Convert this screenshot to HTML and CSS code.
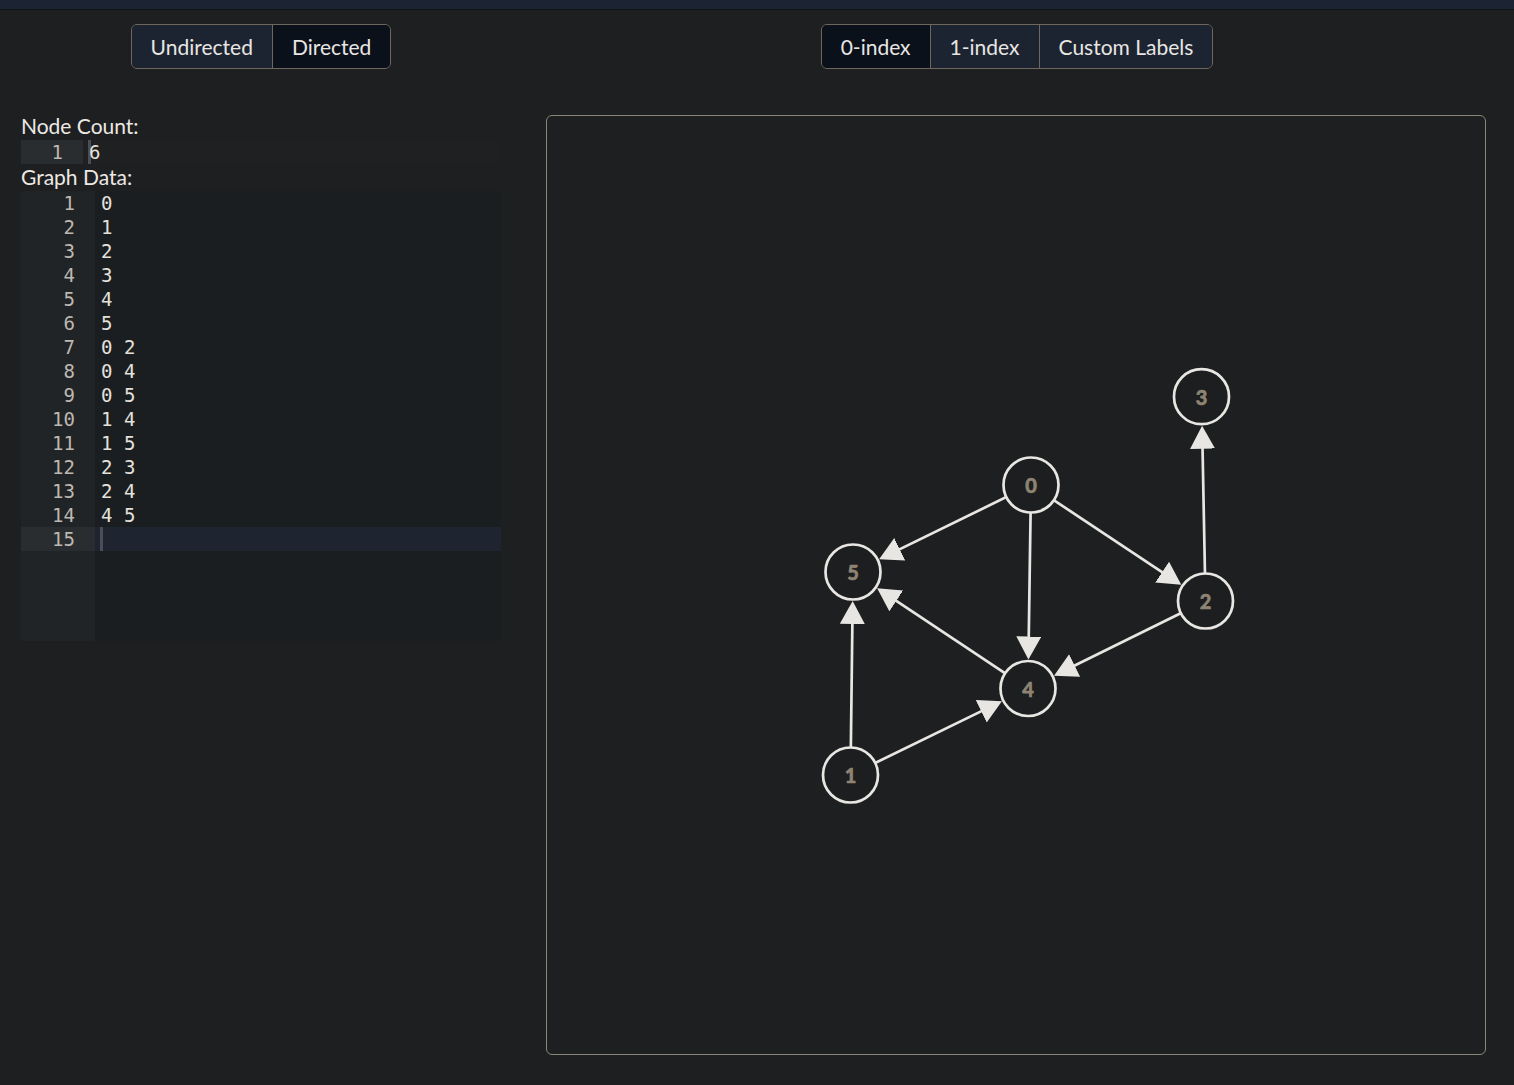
FILE: index.html
```html
<!DOCTYPE html>
<html lang="en">
<head>
<meta charset="utf-8">
<title>Graph Editor</title>
<link rel="stylesheet" href="styles.css">
</head>
<body>
<div class="topbar"></div>
<main class="layout">
  <section class="left-col">
    <div class="btn-row">
      <div class="btn-group">
        <button class="btn">Undirected</button>
        <button class="btn active">Directed</button>
      </div>
    </div>
    <div class="field-label first">Node Count:</div>
    <div class="editor editor-count">
      <div class="gutter gutter-narrow">
        <div class="ln active">1</div>
      </div>
      <div class="code">
        <div class="line"><span class="cursor"></span>6</div>
      </div>
    </div>
    <div class="field-label">Graph Data:</div>
    <div class="editor editor-data">
      <div class="gutter gutter-wide">
        <div class="ln">1</div><div class="ln">2</div><div class="ln">3</div><div class="ln">4</div><div class="ln">5</div>
        <div class="ln">6</div><div class="ln">7</div><div class="ln">8</div><div class="ln">9</div><div class="ln">10</div>
        <div class="ln">11</div><div class="ln">12</div><div class="ln">13</div><div class="ln">14</div><div class="ln active">15</div>
      </div>
      <div class="code">
        <div class="line">0</div><div class="line">1</div><div class="line">2</div><div class="line">3</div><div class="line">4</div>
        <div class="line">5</div><div class="line">0 2</div><div class="line">0 4</div><div class="line">0 5</div><div class="line">1 4</div>
        <div class="line">1 5</div><div class="line">2 3</div><div class="line">2 4</div><div class="line">4 5</div>
        <div class="line active"><span class="cursor"></span></div>
      </div>
    </div>
  </section>
  <section class="right-col">
    <div class="btn-row">
      <div class="btn-group">
        <button class="btn active">0-index</button>
        <button class="btn">1-index</button>
        <button class="btn">Custom Labels</button>
      </div>
    </div>
    <div class="canvas">
      <svg class="graph" width="938" height="938" viewBox="0 0 938 938" xmlns="http://www.w3.org/2000/svg">
        <defs>
          <marker id="arrow" markerUnits="userSpaceOnUse" markerWidth="24" markerHeight="26" refX="18" refY="12.5" orient="auto">
            <path d="M0,0 L23,12.5 L0,25 Z" fill="#e8e6e2"/>
          </marker>
        </defs>
        <g class="edges" stroke="#e8e6e2" stroke-width="2.7">
          <line x1="484" y1="369" x2="630.1" y2="466.1" marker-end="url(#arrow)"/>
          <line x1="484" y1="369" x2="481.5" y2="538.5" marker-end="url(#arrow)"/>
          <line x1="484" y1="369" x2="336.6" y2="441.1" marker-end="url(#arrow)"/>
          <line x1="303.5" y1="659" x2="450.4" y2="587.4" marker-end="url(#arrow)"/>
          <line x1="303.5" y1="659" x2="305.6" y2="490" marker-end="url(#arrow)"/>
          <line x1="658.5" y1="485" x2="655.2" y2="314.7" marker-end="url(#arrow)"/>
          <line x1="658.5" y1="485" x2="511.5" y2="557.5" marker-end="url(#arrow)"/>
          <line x1="481" y1="572.5" x2="334.3" y2="474.9" marker-end="url(#arrow)"/>
        </g>
        <g class="nodes">
          <g><circle cx="484" cy="369" r="27.5"/><text x="484" y="369">0</text></g>
          <g><circle cx="303.5" cy="659" r="27.5"/><text x="303.5" y="659">1</text></g>
          <g><circle cx="658.5" cy="485" r="27.5"/><text x="658.5" y="485">2</text></g>
          <g><circle cx="654.5" cy="280.7" r="27.5"/><text x="654.5" y="280.7">3</text></g>
          <g><circle cx="481" cy="572.5" r="27.5"/><text x="481" y="572.5">4</text></g>
          <g><circle cx="306" cy="456" r="27.5"/><text x="306" y="456">5</text></g>
        </g>
      </svg>
    </div>
  </section>
</main>
</body>
</html>
```

FILE: styles.css
```css
* { box-sizing: border-box; }

html, body {
  margin: 0;
  padding: 0;
  background: #1e1f21;
  color: #e8e6e3;
  font-family: Lato, "Open Sans", "Liberation Sans", sans-serif;
}

body {
  width: 1514px;
  height: 1085px;
  overflow: hidden;
}

.topbar {
  height: 10px;
  background: #1c2433;
  border-bottom: 1px solid #0e1014;
}

.layout {
  display: flex;
  align-items: flex-start;
  padding-left: 21px;
}

.left-col {
  width: 480px;
  display: flex;
  flex-direction: column;
}

.right-col {
  width: 940px;
  margin-left: 45px;
  display: flex;
  flex-direction: column;
}

.btn-row {
  display: flex;
  justify-content: center;
  padding-top: 14px;
  margin-bottom: 46px;
}

.right-col .btn-row { padding-left: 2px; }

.btn-group {
  display: flex;
  border: 1px solid #6e675d;
  border-radius: 6px;
  overflow: hidden;
}

.btn {
  height: 43px;
  padding: 0 19px;
  margin: 0;
  border: none;
  border-left: 1px solid #6e675d;
  background: #1c2431;
  color: #e8e6e3;
  font-family: Lato, "Open Sans", "Liberation Sans", sans-serif;
  font-size: 21px;
  line-height: 43px;
  cursor: pointer;
}

.btn:first-child { border-left: none; }

.btn.active { background: #0b111b; }

.field-label {
  font-size: 21px;
  line-height: 26px;
  height: 26px;
  color: #ece9e4;
}

.field-label.first { margin-top: -2px; }

.editor {
  display: flex;
  width: 480px;
  font-family: "DejaVu Sans Mono", "Liberation Mono", monospace;
  font-size: 19px;
  line-height: 24px;
  background: #1b1e20;
}

.editor-count {
  margin-top: 1px;
  height: 24px;
  background: #1e2022;
}

.editor-data {
  margin-top: 1px;
  height: 450px;
}

.gutter {
  background: #212427;
  color: #bdb8b0;
  text-align: right;
  flex: none;
}

.gutter-narrow { width: 62px; }
.gutter-wide { width: 74px; }

.ln {
  height: 24px;
  padding-right: 20px;
}

.ln.active { background: #2a2d30; }

.code {
  flex: 1;
  color: #e4e1dc;
}

.line {
  height: 24px;
  padding-left: 6px;
  white-space: pre;
}

.line.active { background: #1e2430; }

.cursor {
  display: inline-block;
  width: 3px;
  height: 24px;
  background: #4a4f56;
  vertical-align: top;
  margin-left: -1px;
  margin-right: -2px;
}

.canvas {
  width: 940px;
  height: 940px;
  border: 1px solid #8a857c;
  border-radius: 6px;
  background: #1e1f21;
}

.graph { display: block; }

.nodes circle {
  fill: #1c1e20;
  stroke: #e8e6e2;
  stroke-width: 2.7;
}

.nodes text {
  fill: #8f8473;
  stroke: #8f8473;
  stroke-width: 0.7;
  font-family: Lato, "Open Sans", sans-serif;
  font-weight: 700;
  font-size: 20px;
  text-anchor: middle;
  dominant-baseline: central;
}
```
